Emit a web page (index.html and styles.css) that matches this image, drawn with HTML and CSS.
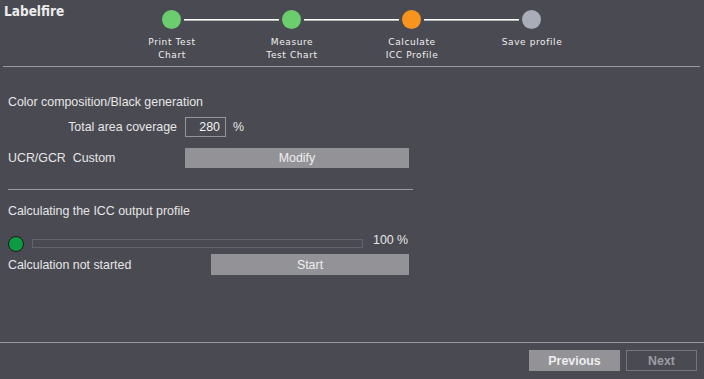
FILE: index.html
```html
<!DOCTYPE html>
<html lang="en">
<head>
  <meta charset="UTF-8">
  <title>Labelfire - ICC Profile</title>
  <link rel="stylesheet" href="styles.css">
</head>
<body>
  <!-- Header -->
  <div class="header">
    <div class="brand">Labelfire</div>
    <div class="stepper">
      <div class="track">
        <span class="dot done"></span><span class="line"></span>
        <span class="dot done"></span><span class="line"></span>
        <span class="dot active"></span><span class="line"></span>
        <span class="dot"></span>
      </div>
      <div class="labels">
        <div>Print Test<br>Chart</div>
        <div>Measure<br>Test Chart</div>
        <div>Calculate<br>ICC Profile</div>
        <div>Save profile</div>
      </div>
    </div>
  </div>
  <div class="header-rule"></div>

  <!-- Content -->
  <div class="content">
    <div class="section-title">Color composition/Black generation</div>
    <div class="row coverage">
      <span class="label-right">Total area coverage</span>
      <input class="value" type="text" value="280">
      <span class="unit">%</span>
    </div>
    <div class="row ucr">
      <span class="label">UCR/GCR&nbsp; Custom</span>
      <button class="btn modify">Modify</button>
    </div>

    <div class="divider"></div>

    <div class="section-title calc-title">Calculating the ICC output profile</div>
    <div class="row progress-row">
      <span class="status-dot"></span>
      <div class="progress"></div>
      <span class="percent">100 %</span>
    </div>
    <div class="row start-row">
      <span class="label">Calculation not started</span>
      <button class="btn start">Start</button>
    </div>
  </div>

  <!-- Footer -->
  <div class="footer">
    <button class="btn nav prev">Previous</button>
    <button class="btn nav next">Next</button>
  </div>
</body>
</html>
```

FILE: styles.css
```css
/* Basic page */
html, body {
  height: 100%;
}
body {
  margin: 0;
  background-color: #4a4a52;
  color: #e6e6e6;
  font-family: "Liberation Sans", Arial, sans-serif;
  font-size: 12.4px;
  display: flex;
  flex-direction: column;
}

/* Header with steps */
.header {
  height: 66px;
  display: flex;
}
.brand {
  width: 112px;
  padding: 3px 0 0 4px;
  box-sizing: border-box;
  font-family: "DejaVu Sans Condensed", "DejaVu Sans", sans-serif;
  font-weight: bold;
  font-size: 13.5px;
  color: #ececec;
}
.stepper {
  width: 480px;
  padding-top: 10px;
}
.track {
  display: flex;
  align-items: center;
  padding: 0 50px;
}
.dot {
  width: 19px;
  height: 19px;
  border-radius: 50%;
  background-color: #a9adb7;
  flex: none;
}
.dot.done {
  background-color: #6bcd6d;
}
.dot.active {
  background-color: #f7941e;
}
.line {
  width: 95px;
  height: 1px;
  margin: 0 3px;
  background-color: #ffffff;
  border-bottom: 1px solid #b8b8bc;
}
.labels {
  display: grid;
  grid-template-columns: repeat(4, 120px);
  margin-top: 7px;
  text-align: center;
  font-family: "DejaVu Sans", sans-serif;
  font-size: 9px;
  letter-spacing: 0.6px;
  line-height: 13px;
  color: #f0f0f0;
}
.header-rule {
  height: 1px;
  margin: 0 4px 0 3px;
  background-color: #9a9a9e;
}

/* Content */
.content {
  flex: 1;
  width: 405px;
  padding-left: 8px;
}
.section-title {
  margin-top: 27px;
  line-height: 16px;
}
.row {
  display: flex;
  align-items: center;
}
.coverage {
  margin-top: 7px;
  height: 20px;
}
.label-right {
  width: 169px;
  margin-right: 8px;
  text-align: right;
}
.value {
  width: 41px;
  height: 20px;
  box-sizing: border-box;
  margin: 0;
  padding: 0 5px;
  border: 1px solid #96969a;
  background-color: #4a4a52;
  color: #f2f2f2;
  font-family: inherit;
  font-size: 12.4px;
  text-align: right;
}
.unit {
  margin-left: 7px;
}
.ucr {
  margin-top: 11px;
  padding-right: 4px;
  justify-content: space-between;
}
.btn {
  border: none;
  background-color: #939397;
  color: #eeeeee;
  font-family: inherit;
  font-size: 12.4px;
  padding: 0;
}
.modify {
  width: 224px;
  height: 20px;
}
.divider {
  margin-top: 21px;
  height: 1px;
  background-color: #9a9a9e;
}
.calc-title {
  margin-top: 13px;
}
.progress-row {
  margin-top: 17px;
  align-items: flex-start;
  height: 16px;
}
.status-dot {
  width: 14px;
  height: 14px;
  border-radius: 50%;
  background-color: #0c9a42;
  border: 1px solid #1c1c1e;
  flex: none;
}
.progress {
  width: 329px;
  height: 7px;
  margin: 3px 0 0 8px;
  border: 1px solid #63636b;
}
.percent {
  margin: -3px 0 0 10px;
  line-height: 14px;
}
.start-row {
  margin-top: 2px;
  padding-right: 4px;
  justify-content: space-between;
}
.start {
  width: 198px;
  height: 21px;
}

/* Footer */
.footer {
  border-top: 1px solid #9a9a9e;
  padding: 7px 7px 8px 0;
  display: flex;
  justify-content: flex-end;
  gap: 6px;
}
.nav {
  height: 21px;
  font-weight: bold;
}
.prev {
  width: 91px;
}
.next {
  width: 71px;
  background-color: transparent;
  border: 1px solid #75757d;
  color: #9c9ca4;
}
```
